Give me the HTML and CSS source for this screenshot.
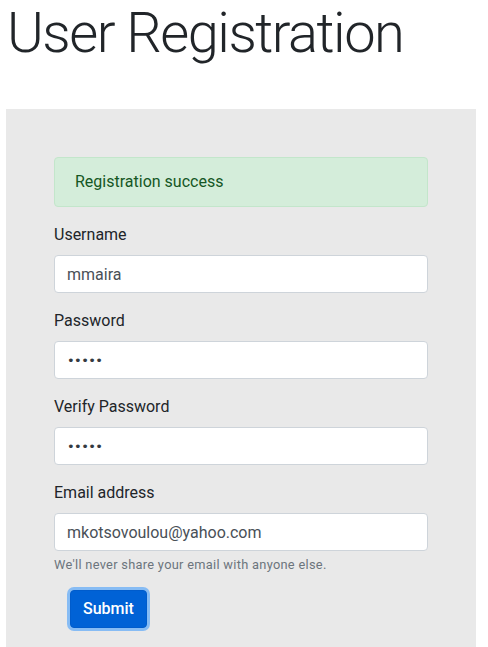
FILE: index.html
```html
<!DOCTYPE html>
<html lang="en">
<head>
<meta charset="utf-8">
<title>User Registration</title>
<link rel="stylesheet" href="styles.css">
</head>
<body>
<h1 class="title">User Registration</h1>
<div class="panel">
  <div class="alert">Registration success</div>
  <form class="form">
    <div class="group">
      <label class="label" for="username">Username</label>
      <input class="input" id="username" type="text" value="mmaira">
    </div>
    <div class="group">
      <label class="label" for="password">Password</label>
      <input class="input secret" id="password" type="password" value="abcde">
    </div>
    <div class="group">
      <label class="label" for="verify">Verify Password</label>
      <input class="input secret" id="verify" type="password" value="abcde">
    </div>
    <div class="group">
      <label class="label" for="email">Email address</label>
      <input class="input" id="email" type="email" value="mkotsovoulou@yahoo.com">
      <small class="help">We'll never share your email with anyone else.</small>
    </div>
    <button class="btn" type="button">Submit</button>
  </form>
</div>
</body>
</html>
```
FILE: styles.css
```css
html, body {
  margin: 0;
  padding: 0;
}
body {
  font-family: Roboto, "Liberation Sans", sans-serif;
  font-size: 16px;
  line-height: 1.5;
  color: #212529;
  background: #fff;
}
.title {
  margin: 0 0 42px 0;
  padding-left: 7px;
  font-size: 56px;
  font-weight: 300;
  line-height: 1.2;
  letter-spacing: -1.5px;
}
.panel {
  margin-left: 6px;
  width: 470px;
  box-sizing: border-box;
  padding: 48px 48px 20px 48px;
  background: #e9e9e9;
}
.alert {
  padding: 12px 20px;
  border: 1px solid #c3e6cb;
  border-radius: 4px;
  background: #d4edda;
  color: #155724;
  margin-bottom: 16px;
}
.form {
  margin: 0;
}
.group {
  margin-bottom: 16px;
}
.label {
  display: inline-block;
  margin-bottom: 8px;
}
.input {
  display: block;
  width: 100%;
  height: 38px;
  box-sizing: border-box;
  padding: 6px 12px;
  font-family: inherit;
  font-size: 16px;
  line-height: 1.5;
  color: #495057;
  background: #fff;
  border: 1px solid #ced4da;
  border-radius: 4px;
}
.secret {
  font-family: "DejaVu Sans", sans-serif;
  font-size: 13px;
  letter-spacing: -0.6px;
  color: #343a40;
}
.help {
  display: block;
  margin-top: 4px;
  font-size: 12.8px;
  letter-spacing: 0.3px;
  color: #6c757d;
}
.btn {
  margin-left: 16px;
  height: 38px;
  padding: 6px 12px;
  font-family: inherit;
  font-size: 16px;
  font-weight: 500;
  line-height: 1.5;
  color: #fff;
  background: #0062d6;
  border: 1px solid #005ccc;
  border-radius: 4px;
  box-shadow: 0 0 0 3px rgba(38, 143, 255, 0.5);
}
```
